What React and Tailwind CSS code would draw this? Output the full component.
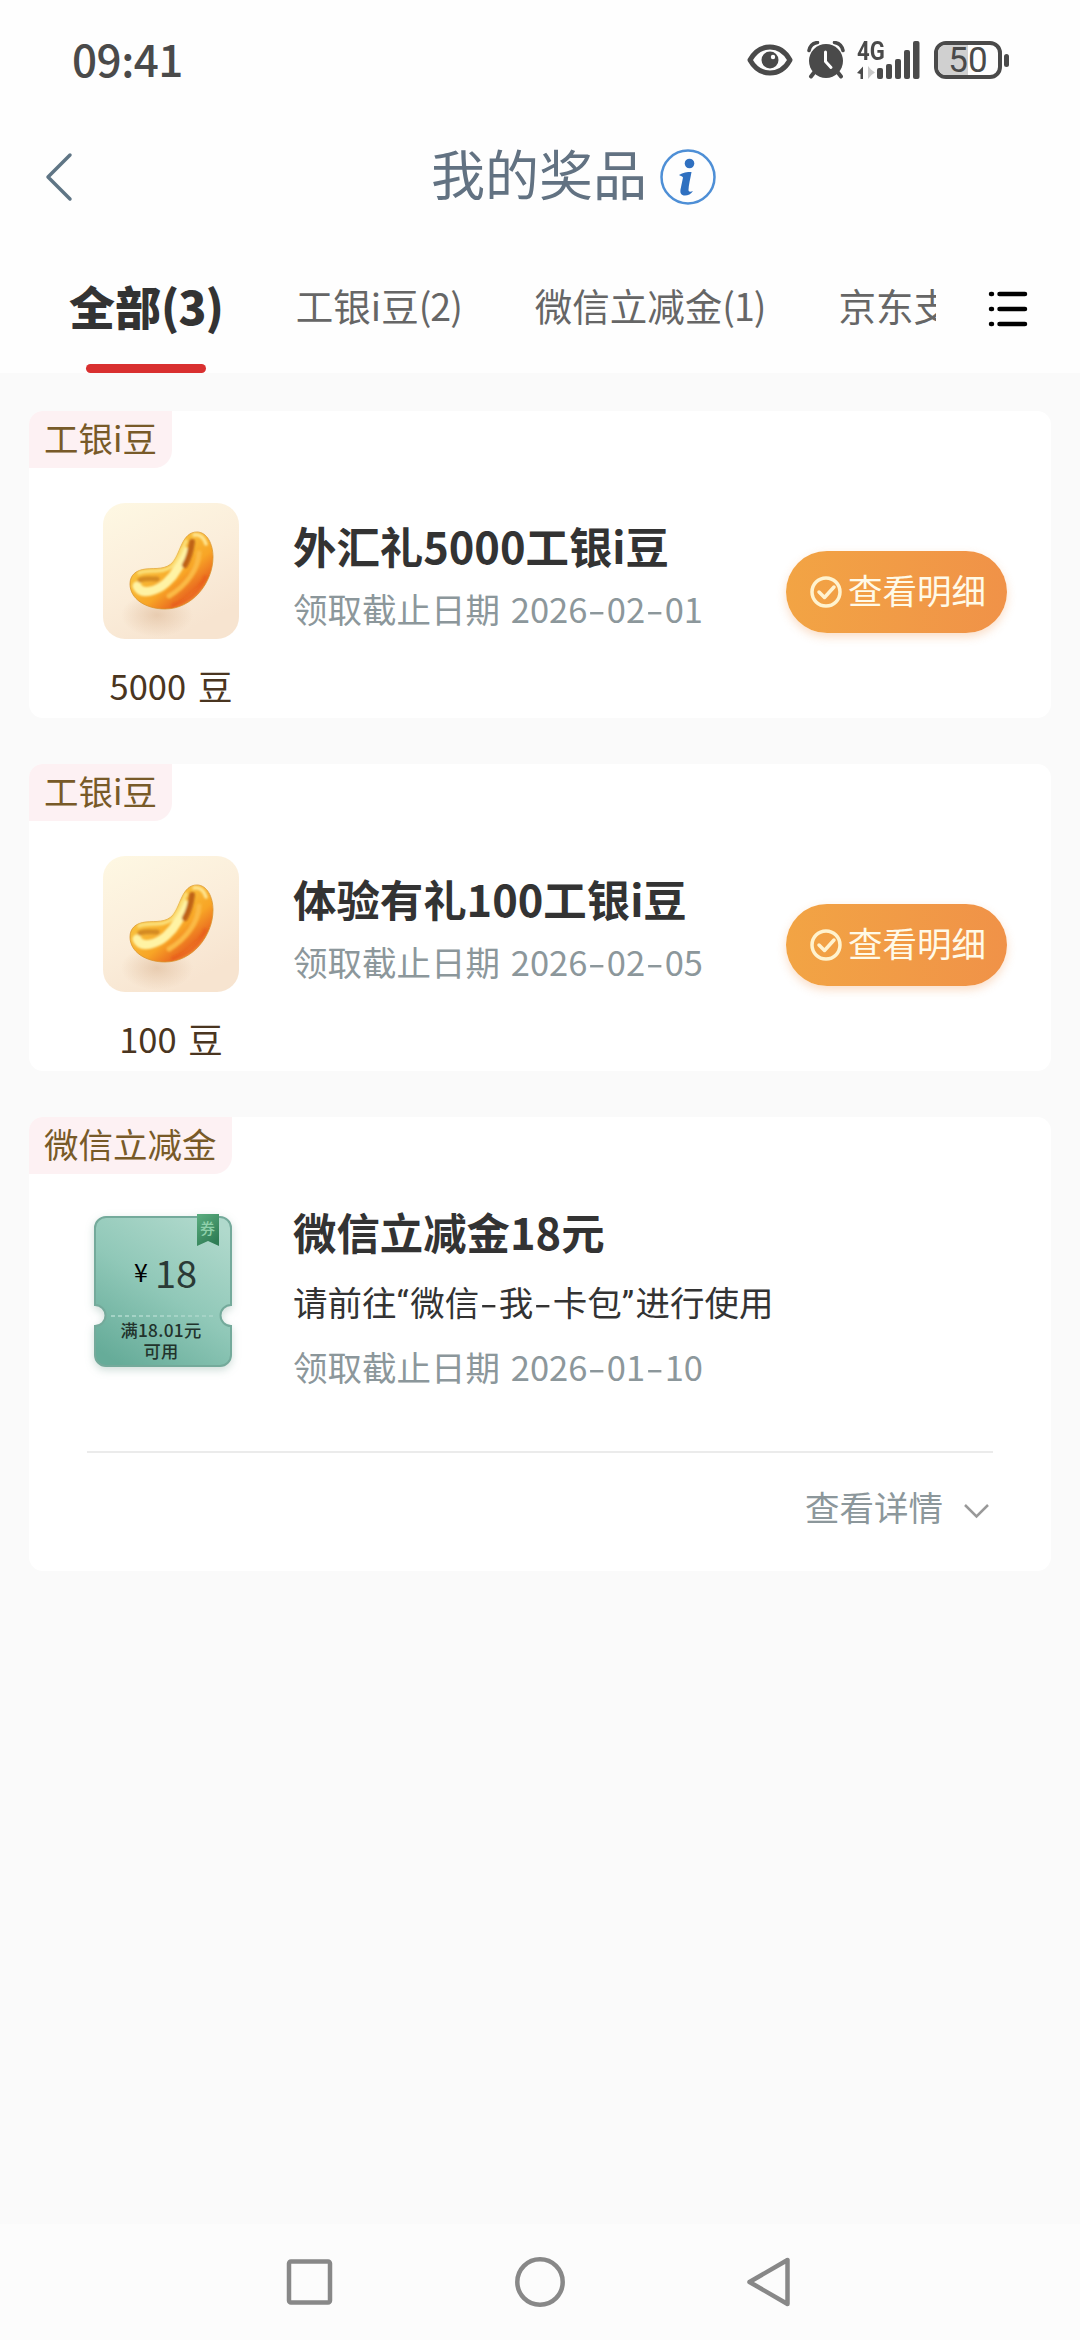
import React, { useState } from "react";

const tabs = [
  { name: "全部", count: "(3)" },
  { name: "工银i豆", count: "(2)" },
  { name: "微信立减金", count: "(1)" },
  { name: "京东支", count: "" },
];

const prizes = [
  {
    id: 1,
    type: "工银i豆",
    title: "外汇礼5000工银i豆",
    deadline: "2026-02-01",
    beans: 5000,
  },
  {
    id: 2,
    type: "工银i豆",
    title: "体验有礼100工银i豆",
    deadline: "2026-02-05",
    beans: 100,
  },
];

// hyphens and curly quotes are spaced differently from the CJK font's own
const Spaced = ({ text }) =>
  text.split(/([-“”])/).map((part, index) => {
    if (part === "-") {
      return (
        <span key={index} className="inline-block w-[19.5px] scale-x-150 text-center">
          -
        </span>
      );
    }
    if (part === "“" || part === "”") {
      return (
        <span key={index} className="font-['Roboto',sans-serif] tracking-[1.5px]">
          {part}
        </span>
      );
    }
    return part;
  });

const StatusBar = () => (
  <div className="flex h-[120px] items-center justify-between pr-[71px] pl-[72px] text-[#4a4a4a]">
    <span className="-mt-1 text-[44px] leading-none font-medium tracking-[-0.5px]">09:41</span>
    <div className="flex items-center">
      <svg width="46" height="32" viewBox="0 0 46 32" fill="none">
        <path
          d="M3 16C8 7 15 3 23 3s15 4 20 13c-5 9-12 13-20 13S8 25 3 16Z"
          stroke="currentColor"
          strokeWidth="5"
          strokeLinejoin="round"
        />
        <circle cx="23" cy="16" r="8.5" fill="currentColor" />
        <circle cx="26" cy="13" r="2.2" fill="#fff" />
      </svg>
      <svg className="ml-3.5" width="38" height="38" viewBox="0 0 38 38" fill="none">
        <circle cx="19" cy="20" r="17" fill="currentColor" />
        <path
          d="M2 9.5C3 5 6 2 10.5 1.5M36 9.5C35 5 32 2 27.5 1.5"
          stroke="currentColor"
          strokeWidth="3.5"
          strokeLinecap="round"
        />
        <path d="M7.5 31 4 35.5M30.5 31l3.5 4.5" stroke="currentColor" strokeWidth="4" strokeLinecap="round" />
        <path d="M18.5 11v9.5l5.5 6" stroke="#fff" strokeWidth="3" strokeLinecap="round" />
      </svg>
      <div className="relative ml-[12px] h-[38px] w-[63px]">
        <span className="absolute top-0 left-0 origin-left scale-x-85 font-['Roboto',sans-serif] text-[26px] leading-[20px] font-bold">
          4G
        </span>
        <svg width="63" height="38" viewBox="0 0 63 38">
          <path d="M0 32 6 25.5V38H3.5v-5Z" fill="currentColor" />
          <path d="M11 25v13l3.5-4 3.5-2.5-4-3Z" fill="#c9c9c9" />
          <g fill="currentColor">
            <rect x="20" y="27" width="6" height="11" rx="2" />
            <rect x="29" y="23" width="6" height="15" rx="2" />
            <rect x="38" y="18" width="6" height="20" rx="2" />
            <rect x="47" y="9" width="6" height="29" rx="2" />
            <rect x="56" y="0" width="6.5" height="38" rx="2" />
          </g>
        </svg>
      </div>
      <div className="relative ml-[14px] flex h-[38px] w-[68px] items-center justify-center overflow-hidden rounded-[12px] border-4 border-current">
        <div className="absolute inset-y-0 left-0 w-1/2 bg-[#d0d0d0]" />
        <span className="relative font-['Roboto',sans-serif] text-[35px] leading-none">50</span>
      </div>
      <div className="ml-0.5 h-[13px] w-[5px] rounded-sm bg-current" />
    </div>
  </div>
);

const BeanIcon = ({ id }) => (
  <svg width="136" height="136" viewBox="0 0 136 136">
    <defs>
      <linearGradient id={`tile${id}`} x1="0" y1="0" x2="0.5" y2="1">
        <stop offset="0" stopColor="#fef8e3" />
        <stop offset="0.55" stopColor="#fbeedb" />
        <stop offset="1" stopColor="#f7e4d0" />
      </linearGradient>
      <linearGradient id={`body${id}`} x1="0.35" y1="0.35" x2="0.8" y2="0.85">
        <stop offset="0" stopColor="#f8bd3a" />
        <stop offset="0.5" stopColor="#f8a526" />
        <stop offset="0.85" stopColor="#ea6c20" />
        <stop offset="1" stopColor="#f29238" />
      </linearGradient>
      <radialGradient id={`shadow${id}`}>
        <stop offset="0" stopColor="#d8b08c" stopOpacity="0.5" />
        <stop offset="1" stopColor="#d8b08c" stopOpacity="0" />
      </radialGradient>
      <filter id={`soft${id}`} x="-20%" y="-20%" width="140%" height="140%">
        <feGaussianBlur stdDeviation="1.1" />
      </filter>
    </defs>
    <rect width="136" height="136" rx="22" fill={`url(#tile${id})`} />
    <ellipse cx="54" cy="112" rx="36" ry="22" fill={`url(#shadow${id})`} />
    <path
      d="M94 29C104 29 110 41 110 54C110 80 89 106 62 106C43 106 27 96 27 81C27 72 33 67 43 66C53 65 63 67 70 59C78 49 79 29 94 29Z"
      fill={`url(#body${id})`}
      stroke="#d9962e"
      strokeWidth="0.8"
    />
    <g fill="none" strokeLinecap="round" filter={`url(#soft${id})`}>
      <path d="M34 83C38 93 54 88 63 80C73 71 79 60 81 48" stroke="#fff3a4" strokeWidth="9" />
      <path d="M36 70C46 66 60 71 69 63C75 57 79 46 83 38" stroke="#fbe07a" strokeWidth="3.5" />
      <path d="M37 77C42 75 48 76 54 76" stroke="#d48a22" strokeWidth="5" />
      <path d="M89 39C88 47 86 55 82 62" stroke="#bf6414" strokeWidth="6" />
      <path d="M96 50C95 66 84 82 66 93" stroke="#fbb944" strokeWidth="5" />
      <path d="M102 74C97 88 86 98 70 102" stroke="#e8581c" strokeWidth="4" opacity="0.5" />
      <path d="M91 32C97 31 101 35 103 41" stroke="#ffe590" strokeWidth="3.5" />
    </g>
  </svg>
);

const TypeTag = ({ children }) => (
  <div className="h-[57px] w-fit rounded-tl-[14px] rounded-br-[18px] bg-[#fdf1f3] px-[15px] text-[34.5px] leading-[52px] text-[#785a28]">
    {children}
  </div>
);

const BeanCard = ({ prize }) => (
  <div className="flex h-[307px] flex-col rounded-[14px] bg-white">
    <TypeTag>{prize.type}</TypeTag>
    <div className="flex">
      <div className="mt-[35px] ml-[74px] flex w-[136px] flex-col items-center">
        <BeanIcon id={prize.id} />
        <div className="mt-[21px] text-[34.5px] leading-[50px] [word-spacing:4px] whitespace-nowrap text-[#4a3520]">
          {prize.beans} 豆
        </div>
      </div>
      <div className="mt-[49px] ml-[54px] flex-1">
        <div className="text-[43.4px] leading-[56px] font-bold text-[#333]">{prize.title}</div>
        <div className="mt-[10px] text-[34.5px] leading-[50px] [word-spacing:3px] text-[#8c979b]">
          领取截止日期 <Spaced text={prize.deadline} />
        </div>
      </div>
      <button
        type="button"
        className="mt-[83px] mr-[44px] flex h-[82px] w-[221px] items-center rounded-full bg-linear-to-r from-[#f2a444] to-[#f09248] pl-6 text-[34.5px] text-[#fffae8] shadow-[0_4px_10px_rgba(240,146,72,0.3)]"
      >
        <svg className="mr-1.5" width="32" height="32" viewBox="0 0 32 32" fill="none" stroke="#fff3cf" strokeWidth="3.5">
          <circle cx="16" cy="16" r="14" />
          <path d="m9 16 5.5 5.5L24 11" strokeLinecap="round" strokeLinejoin="round" />
        </svg>
        <span className="-mt-1.5 leading-[50px]">查看明细</span>
      </button>
    </div>
  </div>
);

const Coupon = () => (
  <div className="relative mt-[39px] ml-[65px] h-[154px] w-[138px]">
    <svg
      className="absolute inset-0 overflow-visible drop-shadow-[0_3px_4px_rgba(60,120,100,0.25)]"
      width="138"
      height="154"
      viewBox="0 0 138 154"
    >
      <defs>
        <linearGradient id="coupon" x1="0.8" y1="0" x2="0.2" y2="1">
          <stop offset="0" stopColor="#b0d9cc" />
          <stop offset="0.5" stopColor="#90c8b8" />
          <stop offset="1" stopColor="#66ac99" />
        </linearGradient>
        <linearGradient id="ribbon" x1="0" y1="0" x2="0.6" y2="1">
          <stop offset="0" stopColor="#5cae80" />
          <stop offset="1" stopColor="#2f7d55" />
        </linearGradient>
      </defs>
      <path
        d="M12 4h114a11 11 0 0 1 11 11v77a10.5 10.5 0 0 0 0 21v29a11 11 0 0 1-11 11H12a11 11 0 0 1-11-11v-29a10.5 10.5 0 0 0 0-21V15A11 11 0 0 1 12 4Z"
        fill="url(#coupon)"
        stroke="#74aa9b"
        strokeWidth="2"
      />
      <path d="M17 103h104" stroke="#a5d3c6" strokeWidth="2" strokeDasharray="4 3" />
      <path d="M103 1h22v32l-11-5-11 5Z" fill="url(#ribbon)" />
    </svg>
    <span className="absolute top-[6px] left-[106px] text-[15px] leading-[18px] font-medium text-[#8fd0aa]">券</span>
    <div className="absolute top-[34px] left-[38px] flex items-start text-[#2b3a36]">
      <span className="mt-[6px] w-[18px] text-center text-[25px] leading-[36px] text-black">¥</span>
      <span className="ml-[5px] text-[38px] leading-[50px]">18</span>
    </div>
    <div className="absolute top-[106px] left-0 w-[134px] text-center text-[17.3px] leading-[21px] font-medium tracking-[0.3px] text-[#22332c]">
      满18.01元
      <br />
      可用
    </div>
  </div>
);

const CouponCard = () => {
  const [open, setOpen] = useState(false);

  return (
    <div className="flex h-[454px] flex-col rounded-[14px] bg-white">
      <TypeTag>微信立减金</TypeTag>
      <div className="flex h-[277px]">
        <Coupon />
        <div className="mt-[29px] ml-[61px]">
          <div className="text-[43.4px] leading-[56px] font-bold text-[#333]">微信立减金18元</div>
          <div className="mt-[17px] text-[34.5px] leading-[50px] text-[#333]">
            <Spaced text="请前往“微信-我-卡包”进行使用" />
          </div>
          <div className="mt-[12px] text-[34.5px] leading-[50px] [word-spacing:3px] text-[#8c979b]">
            领取截止日期 <Spaced text="2026-01-10" />
          </div>
        </div>
      </div>
      <div className="mr-[58px] ml-[58px] h-[2px] bg-[#ebebeb]" />
      <button
        type="button"
        onClick={() => setOpen(!open)}
        className="mt-[28px] mr-[61px] flex items-center self-end text-[34.5px] leading-[50px] text-[#8c979b]"
      >
        查看详情
        <svg className="mt-2.5 ml-5" width="27" height="18" viewBox="0 0 27 18" fill="none">
          <path d="m2 3 11.5 11.5L25 3" stroke="#999" strokeWidth="2.5" />
        </svg>
      </button>
    </div>
  );
};

const App = () => {
  const [active, setActive] = useState(0);

  return (
    <div className="flex h-[2340px] w-[1080px] flex-col overflow-hidden bg-[#fafafa] font-['Noto_Sans_CJK_SC',sans-serif]">
      <header className="h-[373px] bg-[#fefefe]">
        <StatusBar />
        <div className="flex h-[114px] items-center pl-[44px]">
          <svg width="30" height="50" viewBox="0 0 30 50" fill="none">
            <path d="M26 3 4 25l22 22" stroke="#5f7585" strokeWidth="3.5" strokeLinecap="round" strokeLinejoin="round" />
          </svg>
          <h1 className="-mt-2 ml-[357px] text-[54px] leading-[80px] text-[#627282]">我的奖品</h1>
          <svg className="ml-[13px]" width="56" height="56" viewBox="0 0 56 56" fill="none">
            <circle cx="28" cy="28" r="26.5" stroke="#4e8fd6" strokeWidth="2.5" />
            <circle cx="29.5" cy="14.5" r="4.8" fill="#2f70c0" />
            <path
              d="M19 26c4-2.5 8-3 12.5-3-1 6-3 13-3 18 0 2 2 2 4.500 1-2 3-5 4.5-8 4.5-4 0-5-2.5-4.500-6l2.5-12c-1-1.500-3-1.500-4-2.500Z"
              fill="#2f70c0"
            />
          </svg>
        </div>
        <div className="flex h-[139px]">
          <nav className="flex w-[936px] overflow-hidden pl-[69px]">
            {tabs.map((tab, index) => (
              <button
                key={tab.name}
                type="button"
                onClick={() => setActive(index)}
                className={`mr-[73px] flex shrink-0 flex-col items-center whitespace-nowrap ${
                  active === index ? "text-[46px] font-black text-[#333]" : "text-[37.5px] text-[#666]"
                }`}
              >
                <span className="mt-[37px] leading-[68px]">
                  {tab.name}
                  <span className="tracking-[-1px]">{tab.count}</span>
                </span>
                {active === index && <span className="mt-[25px] h-[9px] w-[120px] rounded-full bg-[#d93030]" />}
              </button>
            ))}
          </nav>
          <svg
            className="mt-[54px] ml-[51px]"
            width="42"
            height="42"
            viewBox="0 0 42 42"
            stroke="#000"
            strokeWidth="4.5"
            strokeLinecap="round"
          >
            <path d="M4 6h1M12.5 6H38M4 21h1M12.5 21H38M4 36h1M12.5 36H38" />
          </svg>
        </div>
      </header>

      <main className="flex flex-1 flex-col gap-[46px] px-[29px] pt-[38px]">
        {prizes.map((prize) => (
          <BeanCard key={prize.id} prize={prize} />
        ))}
        <CouponCard />
      </main>

      <footer className="flex h-[116px] bg-[#fcfcfc] pt-[33px] pl-[284px]">
        <svg width="510" height="50" viewBox="0 0 510 50" fill="none" stroke="#888" strokeWidth="4.5" strokeLinejoin="round">
          <rect x="5" y="4.5" width="41" height="41" rx="2" />
          <circle cx="256" cy="25" r="22.7" />
          <path d="M503.5 3v44L465.5 25Z" />
        </svg>
      </footer>
    </div>
  );
};

export default App;
